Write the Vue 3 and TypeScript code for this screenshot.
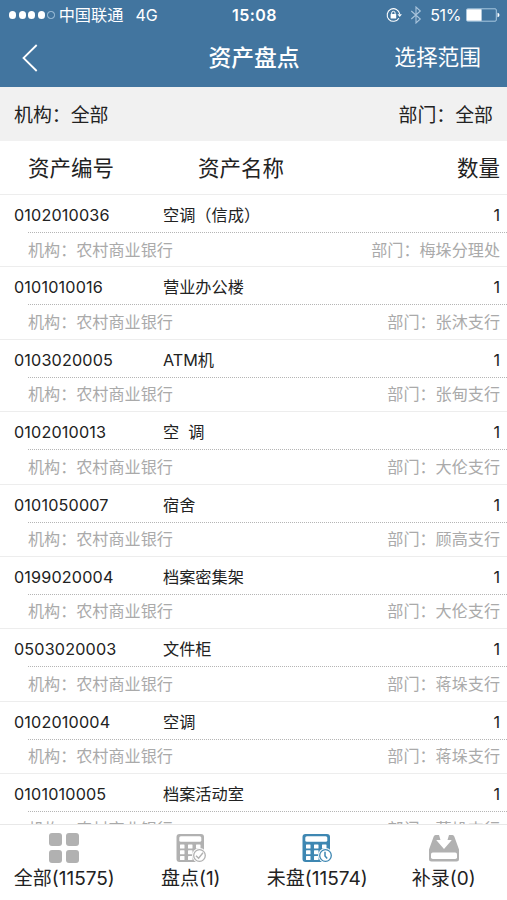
<script setup lang="ts">
interface Asset {
  code: string
  name: string
  count: number
  dept: string
}

const assets: Asset[] = [
  { code: '0102010036', name: '空调（信成）', count: 1, dept: '梅垛分理处' },
  { code: '0101010016', name: '营业办公楼', count: 1, dept: '张沐支行' },
  { code: '0103020005', name: 'ATM机', count: 1, dept: '张甸支行' },
  { code: '0102010013', name: '空  调', count: 1, dept: '大伦支行' },
  { code: '0101050007', name: '宿舍', count: 1, dept: '顾高支行' },
  { code: '0199020004', name: '档案密集架', count: 1, dept: '大伦支行' },
  { code: '0503020003', name: '文件柜', count: 1, dept: '蒋垛支行' },
  { code: '0102010004', name: '空调', count: 1, dept: '蒋垛支行' },
  { code: '0101010005', name: '档案活动室', count: 1, dept: '蒋垛支行' },
]

const tabs = [
  { id: 'all', label: '全部', total: 11575 },
  { id: 'done', label: '盘点', total: 1 },
  { id: 'todo', label: '未盘', total: 11574 },
  { id: 'extra', label: '补录', total: 0 },
]
const signal = [true, true, true, true, false]
</script>

<template>
  <div class="screen">
    <header class="top">
      <div class="status">
        <div class="carrier">
          <span class="dots"><i v-for="(on, i) in signal" :key="i" :class="{ off: !on }"></i></span>
          <span class="operator">中国联通</span>
          <span class="network">4G</span>
        </div>
        <div class="time">15:08</div>
        <div class="indicators">
          <svg class="lock" viewBox="0 0 16 16" width="16" height="16">
            <path d="M12.9 11.200A6.300 6.300 0 1 1 13.700 7" fill="none" stroke="#fff" stroke-width="1.100" />
            <path d="M11.500 7.200h4.400l-2.200 2.800z" fill="#fff" />
            <rect x="4.600" y="7" width="5.600" height="4.500" rx=".5" fill="#fff" />
            <path d="M5.700 7.200V6a1.700 1.700 0 0 1 3.400 0v1.200" fill="none" stroke="#fff" stroke-width="1" />
          </svg>
          <svg class="bluetooth" viewBox="0 0 12 18" width="12" height="18">
            <path d="M1.300 5l9 8L6 17V1l4.300 4-9 8" fill="none" stroke="#a9c4dc" stroke-width="1.100" />
          </svg>
          <span class="percent">51%</span>
          <svg class="battery" viewBox="0 0 34 14" width="34" height="14">
            <rect x=".5" y=".8" width="29.800" height="12.400" rx="1.200" fill="none" stroke="#a9c8e0" />
            <rect x="1" y="1.300" width="14.600" height="11.400" rx=".5" fill="#fff" />
            <path d="M31.500 4.800q2 .5 2 2.200t-2 2.200z" fill="#fff" />
          </svg>
        </div>
      </div>
      <nav class="nav">
        <button class="back" aria-label="返回">
          <svg viewBox="0 0 16 28" width="16" height="28">
            <path d="M14.700 1L1.500 14l13.200 13" fill="none" stroke="#fff" stroke-width="1.800" />
          </svg>
        </button>
        <h1>资产盘点</h1>
        <button class="range">选择范围</button>
      </nav>
    </header>

    <section class="filter">
      <span>机构：全部</span>
      <span>部门：全部</span>
    </section>

    <div class="head">
      <span>资产编号</span>
      <span>资产名称</span>
      <span class="qty">数量</span>
    </div>

    <main class="list">
      <article v-for="a in assets" :key="a.code" class="row">
        <div class="main">
          <span class="code">{{ a.code }}</span>
          <span class="name">{{ a.name }}</span>
          <span class="count">{{ a.count }}</span>
        </div>
        <div class="sub">
          <span>机构：农村商业银行</span>
          <span>部门：{{ a.dept }}</span>
        </div>
      </article>
    </main>

    <footer class="tabs">
      <button v-for="t in tabs" :key="t.id" class="tab" :class="[t.id, { active: t.id === 'todo' }]">
        <svg class="icon" viewBox="0 0 32 32" width="32" height="32">
          <g v-if="t.id === 'all'" fill="currentColor">
            <rect x="1" y="1" width="13" height="13" rx="3" />
            <rect x="18" y="1" width="13" height="13" rx="3" />
            <rect x="1" y="18" width="13" height="13" rx="3" />
            <rect x="18" y="18" width="13" height="13" rx="3" />
          </g>
          <g v-else-if="t.id === 'extra'">
            <path d="M7.500 3h17q1.300 0 1.800 1.500L31 17.500V27q0 2.500-2.500 2.500h-25Q1 29.500 1 27v-9.500L5.700 4.500Q6.200 3 7.500 3z" fill="currentColor" />
            <path d="M10.700 2h10.600l-1.800 6h4.300L16 17 8.200 8h4.300z" fill="#fff" />
            <path d="M13 2h6v7h2.500L16 15l-5.500-6H13z" fill="#fff" />
            <rect x="3" y="20.500" width="26" height="6.500" rx="1.800" fill="#fff" />
          </g>
          <g v-else>
            <rect x="1.500" y="2" width="27.500" height="28" rx="3" fill="currentColor" />
            <rect x="4.300" y="4.200" width="22" height="5.600" rx="1.600" fill="#fff" />
            <g fill="#fff">
              <template v-for="y in [12.500, 18.300, 24]" :key="y">
                <rect v-for="x in [5, 13, 21]" :key="x" :x="x" :y="y" width="4.500" height="4" rx=".5" />
              </template>
            </g>
            <circle cx="24.500" cy="23.500" r="7.400" fill="#fff" />
            <circle cx="24.500" cy="23.500" r="5.800" fill="#fff" stroke="currentColor" stroke-width="1.300" />
            <path v-if="t.id === 'done'" d="M21 23.700l2.600 2.500 4.400-5.400" fill="none" stroke="currentColor" stroke-width="1.400" />
            <path v-else d="M24 19.800v4.200l2.200 2.600" fill="none" stroke="currentColor" stroke-width="1.500" />
          </g>
        </svg>
        <span class="label">{{ t.label }}({{ t.total }})</span>
      </button>
    </footer>
  </div>
</template>

<style>
body { margin: 0; overflow: hidden; }
</style>

<style scoped>
.screen {
  display: flex;
  flex-direction: column;
  width: 507px;
  height: 900px;
  overflow: hidden;
  background: #fff;
  color: #222;
  font-family: Inter, "Noto Sans CJK SC", sans-serif;
}
button {
  border: 0;
  padding: 0;
  background: none;
  font: inherit;
  color: inherit;
}
svg { display: block; flex: none; }
.top {
  flex: none;
  height: 87px;
  background: #42759f;
  color: #fff;
}
.status {
  display: grid;
  grid-template-columns: 1fr auto 1fr;
  align-items: center;
  height: 30px;
  padding: 0 7px 0 9px;
  font-size: 16px;
}
.carrier, .indicators { display: flex; align-items: center; }
.dots { display: flex; gap: 2.300px; }
.dots i {
  box-sizing: border-box;
  width: 7.300px;
  height: 7.300px;
  border-radius: 50%;
  background: #fff;
}
.dots .off { background: none; border: 1px solid #a9c8e0; }
.operator { margin-left: 4px; font-size: 16.200px; line-height: 30px; }
.network { margin-left: 12px; }
.time { font-weight: 600; letter-spacing: .5px; }
.indicators { justify-content: flex-end; }
.lock { margin-top: -1px; }
.bluetooth { margin-left: 8px; margin-top: -1px; }
.percent { margin-left: 8px; letter-spacing: -.4px; }
.battery { margin-left: 5px; margin-top: -1px; }
.nav {
  display: grid;
  grid-template-columns: 1fr auto 1fr;
  align-items: center;
  height: 56px;
  padding: 0 26px 0 22px;
}
.back { justify-self: start; }
h1 {
  margin: 0;
  padding-left: 5px;
  font-size: 22.800px;
  font-weight: 500;
  line-height: 32px;
}
.range { justify-self: end; margin-top: -2px; font-size: 21.700px; line-height: 32px; }
.filter {
  flex: none;
  box-sizing: border-box;
  display: flex;
  align-items: center;
  justify-content: space-between;
  height: 54px;
  padding: 0 14px 2px;
  background: #f1f1f1;
  font-size: 18.900px;
}
.head {
  flex: none;
  box-sizing: border-box;
  display: grid;
  grid-template-columns: 170px 1fr auto;
  align-items: center;
  height: 53px;
  padding: 0 7px 2px 28px;
  font-size: 21.500px;
}
.list { flex: 1; min-height: 0; overflow: hidden; }
.row {
  box-sizing: border-box;
  height: 72.375px;
  border-top: 1px solid #ededed;
}
.main {
  box-sizing: border-box;
  display: grid;
  grid-template-columns: 149px 1fr auto;
  align-items: center;
  height: 37px;
  padding: 1px 7px 0 14px;
  font-size: 16.200px;
}
.code, .count { padding-top: 2px; }
.code { letter-spacing: .15px; }
.name { white-space: pre; }
.sub {
  box-sizing: border-box;
  display: flex;
  align-items: center;
  justify-content: space-between;
  height: 33px;
  margin-left: 28px;
  padding: 0 7px 1px 0;
  border-top: 1px dotted #b5b5b5;
  color: #aaa;
  font-size: 16.100px;
}
.tabs {
  flex: none;
  box-sizing: border-box;
  display: grid;
  grid-template-columns: repeat(4, 1fr);
  height: 76px;
  padding-left: 1px;
  border-top: 1px solid #e8e8e8;
  background: #fff;
}
.tab {
  display: flex;
  flex-direction: column;
  align-items: center;
  padding-top: 7px;
  white-space: nowrap;
}
.icon { color: #b1b1b1; }
.active .icon { color: #3e87b2; }
.label { font-size: 19px; line-height: 30px; }
</style>
